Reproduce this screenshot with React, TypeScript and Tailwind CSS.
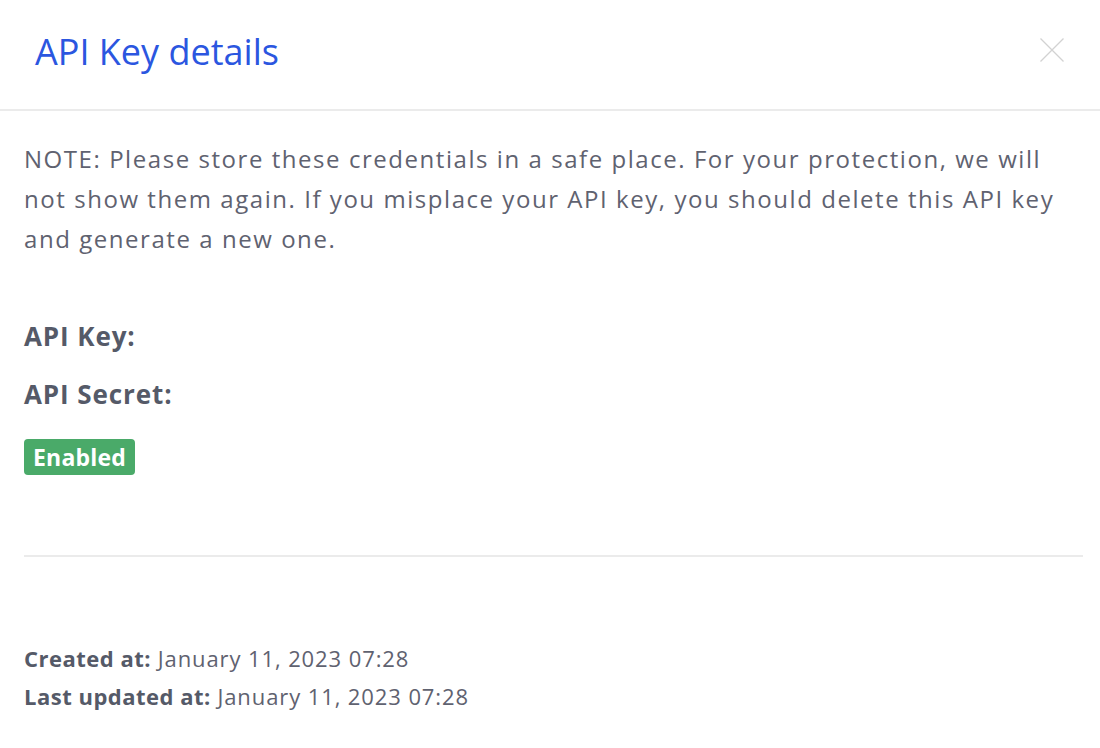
import React from "react";

export default function App() {
  return (
    <div className="w-[1100px] h-[748px] bg-white overflow-hidden" style={{ fontFamily: "'Open Sans', 'Noto Sans', sans-serif" }}>
      <div className="h-[111px] border-b-2 border-[#ebebeb] flex items-start justify-between pl-[35px] pr-[36px]">
        <h1 className="mt-[30px] text-[36px] leading-[44px] text-[#2b56e0] font-normal">API Key details</h1>
        <button className="mt-[38px] w-[24px] h-[24px] text-[#d2d2d2]">
          <svg width="24" height="24" viewBox="0 0 24 24" fill="none" stroke="currentColor" strokeWidth="1.3">
            <path d="M0.5 0.5 L23.5 23.5 M23.5 0.5 L0.5 23.5" />
          </svg>
        </button>
      </div>
      <div className="pl-[24px] pr-[17px]">
        <p className="pt-[28px] pr-[7px] text-[24px] leading-[40px] tracking-[1.55px] text-[#5f6270]">
          NOTE: Please store these credentials in a safe place. For your protection, we will not show them again. If you misplace your API key, you should delete this API key and generate a new one.
        </p>
        <div className="mt-[57px] text-[26px] leading-[40px] tracking-[0.9px] font-bold text-[#555a68]">API Key:</div>
        <div className="mt-[18px] text-[26px] leading-[40px] tracking-[0.9px] font-bold text-[#555a68]">API Secret:</div>
        <div className="mt-[25px] flex">
          <span className="block bg-[#4aaa69] text-white font-bold text-[23px] leading-[36px] tracking-[0.2px] px-[9px] rounded-[4px]">Enabled</span>
        </div>
        <div className="mt-[80px] border-t-2 border-[#ebebeb]" />
        <div className="mt-[82px] text-[22px] leading-[38px] tracking-[0.9px] text-[#5f6270]">
          <div><span className="font-bold tracking-[0.5px] text-[#555a68]">Created at:</span> January 11, 2023 07:28</div>
          <div><span className="font-bold tracking-[0.5px] text-[#555a68]">Last updated at:</span> January 11, 2023 07:28</div>
        </div>
      </div>
    </div>
  );
}
